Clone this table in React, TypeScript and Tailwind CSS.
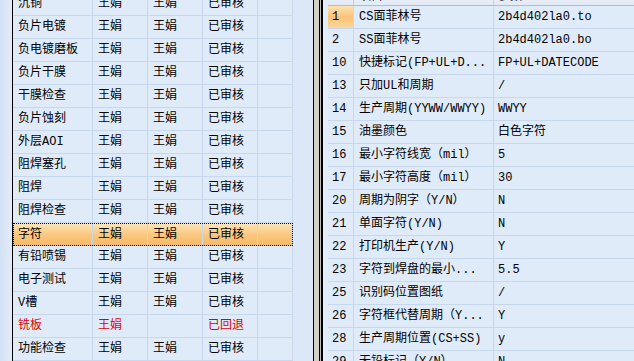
import React from 'react';

type FlowRow = { step: string; a: string; b: string; status: string; red?: boolean; selected?: boolean };

const flowRows: FlowRow[] = [
  { step: '沉铜', a: '王娟', b: '王娟', status: '已审核' },
  { step: '负片电镀', a: '王娟', b: '王娟', status: '已审核' },
  { step: '负电镀磨板', a: '王娟', b: '王娟', status: '已审核' },
  { step: '负片干膜', a: '王娟', b: '王娟', status: '已审核' },
  { step: '干膜检查', a: '王娟', b: '王娟', status: '已审核' },
  { step: '负片蚀刻', a: '王娟', b: '王娟', status: '已审核' },
  { step: '外层AOI', a: '王娟', b: '王娟', status: '已审核' },
  { step: '阻焊塞孔', a: '王娟', b: '王娟', status: '已审核' },
  { step: '阻焊', a: '王娟', b: '王娟', status: '已审核' },
  { step: '阻焊检查', a: '王娟', b: '王娟', status: '已审核' },
  { step: '字符', a: '王娟', b: '王娟', status: '已审核', selected: true },
  { step: '有铅喷锡', a: '王娟', b: '王娟', status: '已审核' },
  { step: '电子测试', a: '王娟', b: '王娟', status: '已审核' },
  { step: 'V槽', a: '王娟', b: '王娟', status: '已审核' },
  { step: '铣板', a: '王娟', b: '', status: '已回退', red: true },
  { step: '功能检查', a: '王娟', b: '王娟', status: '已审核' },
];

const params: [string, string, string][] = [
  ['1', 'CS面菲林号', '2b4d402la0.to'],
  ['2', 'SS面菲林号', '2b4d402la0.bo'],
  ['10', '快捷标记(FP+UL+D...', 'FP+UL+DATECODE'],
  ['13', '只加UL和周期', '/'],
  ['14', '生产周期(YYWW/WWYY)', 'WWYY'],
  ['15', '油墨颜色', '白色字符'],
  ['16', '最小字符线宽（mil）', '5'],
  ['17', '最小字符高度（mil）', '30'],
  ['20', '周期为阴字（Y/N）', 'N'],
  ['21', '单面字符(Y/N)', 'N'],
  ['22', '打印机生产(Y/N)', 'Y'],
  ['23', '字符到焊盘的最小...', '5.5'],
  ['25', '识别码位置图纸', '/'],
  ['26', '字符框代替周期（Y...', 'Y'],
  ['28', '生产周期位置(CS+SS)', 'y'],
  ['29', '无铅标记（Y/N）', 'N'],
];

const cell = 'h-full flex items-center border-r border-[#c6d7ee] whitespace-nowrap overflow-hidden';

const FlowGrid: React.FC = () => (
  <div className="flex h-full w-[313px] shrink-0 bg-[#dce8f8]">
    <div className="w-[12px] shrink-0 bg-gradient-to-r from-[#d3e2f5] to-[#e2ecf9]" />
    <div className="flex-1 border-l border-black overflow-hidden">
      <div className="-mt-[7px]">
        {flowRows.map((r, i) => (
          <div
            key={i}
            className={
              r.selected
                ? 'flex h-[23px] w-[280px] bg-gradient-to-b from-[#fde6b9] via-[#fac880] to-[#f8b862] outline-1 outline-dotted outline-black -outline-offset-1'
                : 'flex h-[23px] w-[280px] bg-[#e0ebf9] border-b border-[#c6d7ee]'
            }
          >
            <div className={`${cell} w-[80px] pl-[5px] ${r.red ? 'text-[#e00000]' : 'text-black'}`}>{r.step}</div>
            <div className={`${cell} w-[55px] pl-[5px] ${r.red ? 'text-[#e00000]' : 'text-black'}`}>{r.a}</div>
            <div className={`${cell} w-[55px] pl-[5px] text-black`}>{r.b}</div>
            <div className={`${cell} w-[55px] pl-[5px] ${r.red ? 'text-[#e00000]' : 'text-black'}`}>{r.status}</div>
            <div className={`${cell} w-[35px]`} />
          </div>
        ))}
      </div>
    </div>
  </div>
);

const Splitter: React.FC = () => (
  <div className="flex h-full shrink-0">
    <div className="w-px bg-black" />
    <div className="w-[5px] bg-[#d4d0c8]" />
    <div className="w-px bg-black" />
    <div className="w-px bg-[#bcbcbc]" />
    <div className="w-[2px] bg-black" />
  </div>
);

const ParamGrid: React.FC = () => (
  <div className="flex h-full flex-1 bg-[#dce8f8]">
    <div className="w-[5px] shrink-0 bg-[#e4eefa]" />
    <div className="flex-1 overflow-hidden">
      <div className="-mt-[16px]">
        <div className="flex h-[22px] bg-gradient-to-b from-[#f6f9fd] to-[#e2eaf5] border-b border-[#a9bfd9] text-[#1e2f4a]">
          <div className="h-full w-[26px] pl-[4px] pb-[2px] flex items-end border-r border-[#c0d0e6]">No</div>
          <div className="h-full w-[140px] pl-[5px] pb-[2px] flex items-end border-r border-[#c0d0e6]">项目</div>
          <div className="h-full flex-1 pl-[4px] pb-[2px] flex items-end">参数</div>
        </div>
        {params.map(([no, item, val], i) => (
          <div key={i} className="flex h-[23px] bg-[#e0ebf9] border-b border-[#c6d7ee] text-black">
            <div
              className={
                i === 0
                  ? `${cell} w-[26px] pl-[4px] bg-gradient-to-b from-[#fde3b0] via-[#fac27a] to-[#fbd79c]`
                  : `${cell} w-[26px] pl-[4px]`
              }
            >
              {no}
            </div>
            <div className={`${cell} w-[140px] pl-[5px]`}>{item}</div>
            <div className="h-full flex-1 pl-[4px] flex items-center whitespace-nowrap">{val}</div>
          </div>
        ))}
      </div>
    </div>
  </div>
);

const App: React.FC = () => {
  return (
    <div className="flex h-[361px] w-[634px] overflow-hidden bg-[#dce8f8] text-[12px] leading-none font-['Liberation_Mono','Noto_Sans_CJK_SC',monospace]">
      <FlowGrid />
      <Splitter />
      <ParamGrid />
    </div>
  );
};

export default App;
